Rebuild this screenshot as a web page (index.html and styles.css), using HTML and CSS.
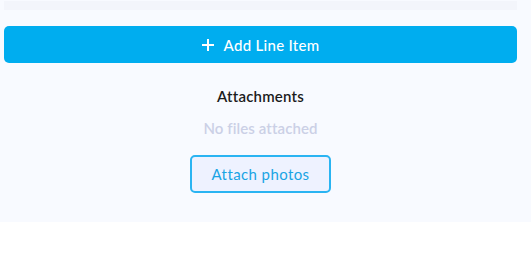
FILE: index.html
```html
<!DOCTYPE html>
<html>
<head>
<meta charset="utf-8">
<link rel="stylesheet" href="styles.css">
</head>
<body>
<section class="panel">
  <div class="inner">
    <div class="strip"></div>
    <button class="add-btn">
      <svg class="plus" width="12" height="12" viewBox="0 0 12 12"><path d="M6 1v10M1 6h10" stroke="#fff" stroke-width="2" stroke-linecap="square"/></svg>
      <span>Add Line Item</span>
    </button>
    <div class="attachments">
      <h3 class="title">Attachments</h3>
      <p class="empty">No files attached</p>
      <button class="attach-btn">Attach photos</button>
    </div>
  </div>
</section>
</body>
</html>
```

FILE: styles.css
```css
* { box-sizing: border-box; }
html, body { margin: 0; padding: 0; background: #ffffff; }
body { font-family: "Lato", "Inter", sans-serif; }
.panel { background: #f8faff; height: 222px; padding-top: 1px; }
.inner { padding: 0 14px 0 4px; }
.strip { height: 9px; background: #f3f5fb; }
.add-btn {
  margin-top: 16px;
  width: 100%;
  height: 37px;
  border: 0;
  border-radius: 5px;
  background: #00adef;
  color: #fff;
  font-family: inherit;
  font-size: 15px;
  font-weight: 500;
  letter-spacing: 0.3px;
  display: flex;
  align-items: center;
  justify-content: center;
  gap: 10px;
  padding: 0;
}
.attachments { display: flex; flex-direction: column; align-items: center; }
.title { margin: 24px 0 0; font-size: 15px; font-weight: 600; color: #1c1c1c; line-height: 18px; letter-spacing: 0.2px; }
.empty { margin: 14px 0 0; font-size: 15px; font-weight: 600; color: #cbd0e6; line-height: 18px; letter-spacing: 0.1px; }
.attach-btn {
  margin-top: 18px;
  width: 141px;
  height: 38px;
  border: 2px solid #2ab4f2;
  border-radius: 5px;
  background: #eef2ff;
  color: #1aa4e4;
  font-family: inherit;
  font-size: 15px;
  letter-spacing: 0.4px;
  padding: 0;
}
```
